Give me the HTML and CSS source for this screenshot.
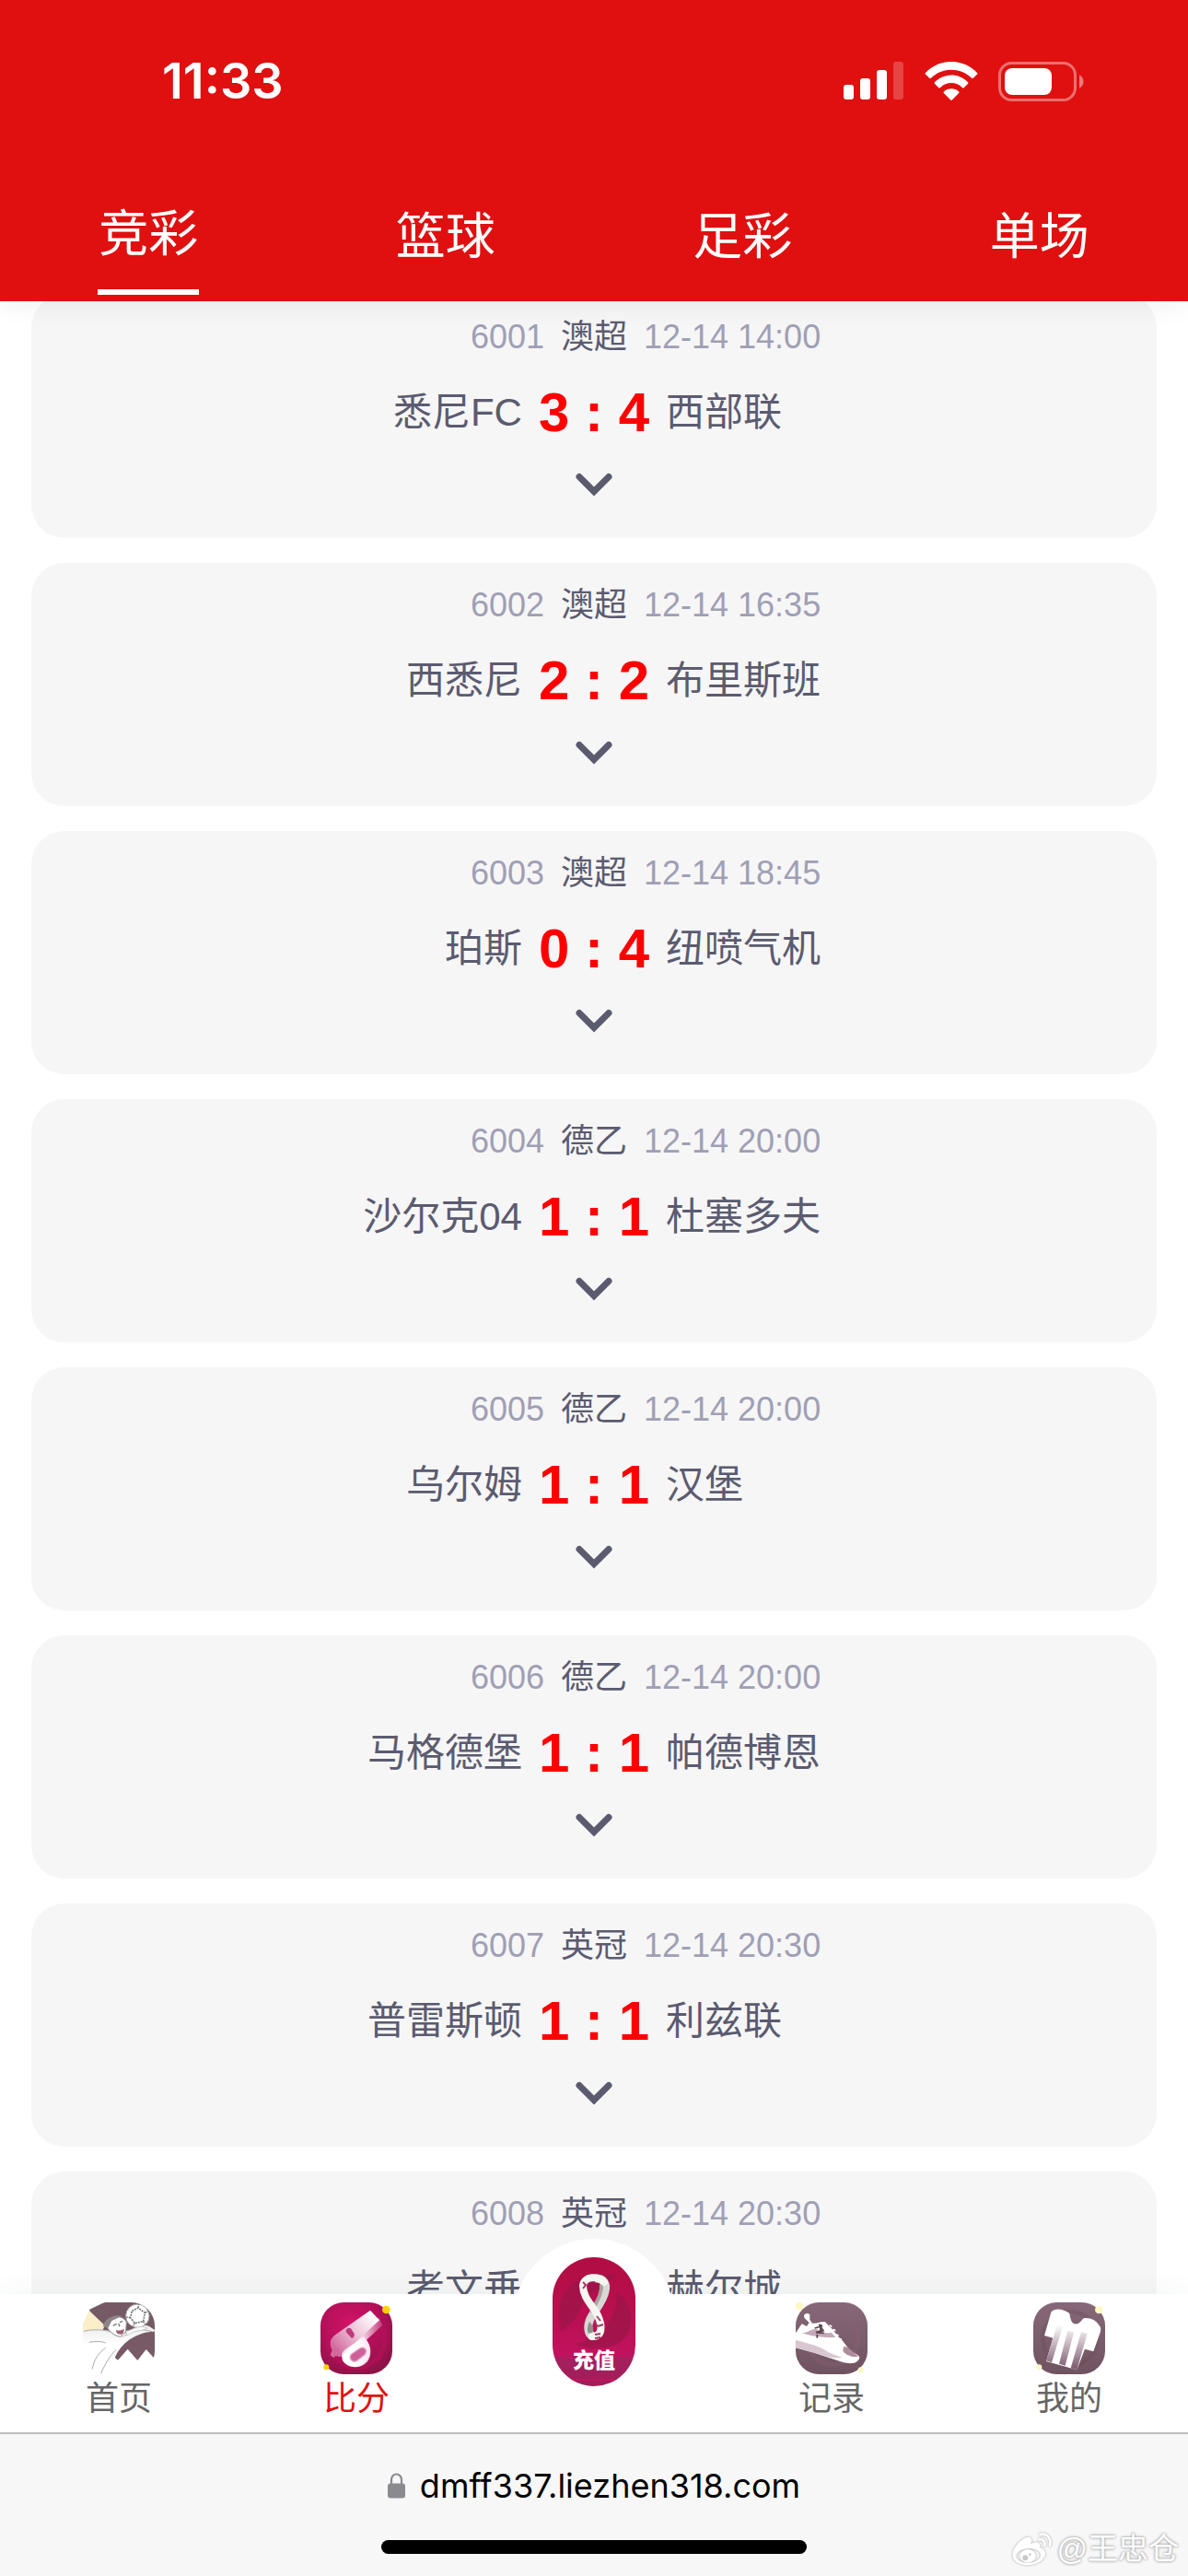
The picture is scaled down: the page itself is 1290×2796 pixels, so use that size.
FILE: index.html
```html
<!DOCTYPE html>
<html lang="zh-CN">
<head>
<meta charset="utf-8">
<meta name="viewport" content="width=device-width, initial-scale=1">
<title>比分</title>
<link rel="stylesheet" href="styles.css">
</head>
<body>
<svg class="defs" aria-hidden="true">
  <defs>
    <symbol id="chevron" viewBox="0 0 40 26"><path d="M4 4.500 20 20.500 36 4.500" fill="none" stroke="currentColor" stroke-width="7" stroke-linecap="round"/></symbol>
  </defs>
</svg>
<header class="header">
  <div class="status">
    <time class="clock">11:33</time>
    <div class="status-icons">
      <svg width="66" height="42" viewBox="0 0 66 42" fill="#fff" aria-hidden="true">
        <rect x="0" y="25" width="11" height="16" rx="3"/><rect x="18" y="18" width="11" height="23" rx="3"/><rect x="36" y="9" width="11" height="32" rx="3"/><rect x="54" y="0" width="11" height="41" rx="3" opacity=".22"/>
      </svg>
      <svg width="58" height="43" viewBox="0 0 58 43" fill="#fff" aria-hidden="true">
        <path d="M.8 12.200C16-4.200 42-4.200 57.200 12.200a1.200 1.200 0 0 1 0 1.400l-4.400 4.200a1.200 1.200 0 0 1-1.600 0C39 5.600 19 5.600 6.800 17.800a1.200 1.200 0 0 1-1.600 0L.8 13.600a1.200 1.200 0 0 1 0-1.400Z"/>
        <path d="M10.800 22.400C21 12 37 12 47.200 22.400a1.200 1.200 0 0 1 0 1.400l-4.500 4.400a1.200 1.200 0 0 1-1.600 0C34 21.400 24 21.400 16.900 28.200a1.200 1.200 0 0 1-1.600 0l-4.500-4.400a1.200 1.200 0 0 1 0-1.400Z"/>
        <path d="M20.800 32.400c4.600-4.200 11.800-4.200 16.400 0a1.200 1.200 0 0 1 0 1.600l-7.400 7.600a1.200 1.200 0 0 1-1.600 0L20.800 34a1.200 1.200 0 0 1 0-1.600Z"/>
      </svg>
      <svg width="93" height="43" viewBox="0 0 93 43" fill="#fff" aria-hidden="true">
        <rect x="1.500" y="1.500" width="82" height="40" rx="13" fill="none" stroke="#fff" stroke-width="3" opacity=".4"/>
        <rect x="7" y="7" width="51" height="29" rx="8"/><path d="M88 14.500c6 2 6 12 0 14Z" opacity=".45"/>
      </svg>
    </div>
  </div>
  <nav class="tabs">
    <a class="tab tab-active" href="#jingcai">竞彩</a>
    <a class="tab" href="#lanqiu">篮球</a>
    <a class="tab" href="#zucai">足彩</a>
    <a class="tab" href="#danchang">单场</a>
  </nav>
</header>
<main class="scroll">
  <div class="list">
    <article class="card">
      <div class="row meta"><span class="left">6001</span><span class="league">澳超</span><time>12-14 14:00</time></div>
      <div class="row match"><span class="left">悉尼FC</span><strong class="score">3 : 4</strong><span>西部联</span></div>
      <button class="more" type="button" aria-label="展开"><svg class="chevron"><use href="#chevron"/></svg></button>
    </article>
    <article class="card">
      <div class="row meta"><span class="left">6002</span><span class="league">澳超</span><time>12-14 16:35</time></div>
      <div class="row match"><span class="left">西悉尼</span><strong class="score">2 : 2</strong><span>布里斯班</span></div>
      <button class="more" type="button" aria-label="展开"><svg class="chevron"><use href="#chevron"/></svg></button>
    </article>
    <article class="card">
      <div class="row meta"><span class="left">6003</span><span class="league">澳超</span><time>12-14 18:45</time></div>
      <div class="row match"><span class="left">珀斯</span><strong class="score">0 : 4</strong><span>纽喷气机</span></div>
      <button class="more" type="button" aria-label="展开"><svg class="chevron"><use href="#chevron"/></svg></button>
    </article>
    <article class="card">
      <div class="row meta"><span class="left">6004</span><span class="league">德乙</span><time>12-14 20:00</time></div>
      <div class="row match"><span class="left">沙尔克04</span><strong class="score">1 : 1</strong><span>杜塞多夫</span></div>
      <button class="more" type="button" aria-label="展开"><svg class="chevron"><use href="#chevron"/></svg></button>
    </article>
    <article class="card">
      <div class="row meta"><span class="left">6005</span><span class="league">德乙</span><time>12-14 20:00</time></div>
      <div class="row match"><span class="left">乌尔姆</span><strong class="score">1 : 1</strong><span>汉堡</span></div>
      <button class="more" type="button" aria-label="展开"><svg class="chevron"><use href="#chevron"/></svg></button>
    </article>
    <article class="card">
      <div class="row meta"><span class="left">6006</span><span class="league">德乙</span><time>12-14 20:00</time></div>
      <div class="row match"><span class="left">马格德堡</span><strong class="score">1 : 1</strong><span>帕德博恩</span></div>
      <button class="more" type="button" aria-label="展开"><svg class="chevron"><use href="#chevron"/></svg></button>
    </article>
    <article class="card">
      <div class="row meta"><span class="left">6007</span><span class="league">英冠</span><time>12-14 20:30</time></div>
      <div class="row match"><span class="left">普雷斯顿</span><strong class="score">1 : 1</strong><span>利兹联</span></div>
      <button class="more" type="button" aria-label="展开"><svg class="chevron"><use href="#chevron"/></svg></button>
    </article>
    <article class="card">
      <div class="row meta"><span class="left">6008</span><span class="league">英冠</span><time>12-14 20:30</time></div>
      <div class="row match"><span class="left">考文垂</span><strong class="score">1 : 1</strong><span>赫尔城</span></div>
      <button class="more" type="button" aria-label="展开"><svg class="chevron"><use href="#chevron"/></svg></button>
    </article>
  </div>
</main>
<nav class="tabbar">
  <a class="item" href="#home">
    <svg class="icon" viewBox="0 0 234 234" aria-hidden="true">
      <defs>
        <clipPath id="tile"><rect width="234" height="234" rx="76"/></clipPath>
        <linearGradient id="cape" x1="0" y1="0" x2="0" y2="1"><stop offset="0" stop-color="#ececec"/><stop offset=".4" stop-color="#fff"/></linearGradient>
      </defs>
      <g clip-path="url(#tile)">
        <rect width="234" height="234" fill="#fff"/>
        <path d="M20 24 70 0h170v100H60Z" fill="#755a65"/>
        <path d="M0 70 20 26l52 50-10 18H0Z" fill="#fbeec9"/>
        <path d="M104 180C130 120 180 94 240 84v106l-34-37-28 36-32-37-32 36Z" fill="#775a66"/>
        <path d="M0 96C40 82 80 84 130 110 160 86 190 66 216 78l24 16C180 96 134 122 104 176L60 234H0Z" fill="url(#cape)"/>
        <path d="M2 94c44-10 90-4 128 18M30 218c8-36 22-54 44-70M58 234c14-34 30-60 50-80M20 130c20-4 40-4 54 2M134 110c30-20 60-26 94-14" fill="none" stroke="#aaa" stroke-width="3"/>
        <path d="M76 78C86 42 130 38 142 64l-2 32-18 16C100 108 90 98 76 78Z" fill="#fff" stroke="#888" stroke-width="3"/>
        <path d="M66 78C70 50 106 38 128 44L94 60 82 84Z" fill="#8d8589"/>
        <path d="M108 90c12 4 18 0 26-4 0 10-2 18-12 18s-14-6-14-14Z" fill="#9c6070"/>
        <path d="m98 76 12-6m10-5 10-4m-14 8 4 10" fill="none" stroke="#777" stroke-width="4"/>
        <circle cx="178" cy="44" r="38" fill="#fff" stroke="#aaa" stroke-width="3"/>
        <path d="m160 28 20-10 22 16-5 28-28 6-14-18ZM180 18l2-12M202 34l12-6M197 62l8 12M169 68l-6 10M155 50l-14-2" fill="none" stroke="#777" stroke-width="5" stroke-dasharray="6 3"/>
        <path d="M140 94c24-4 44-24 70-10l-20 8c-20 0-30 6-46 16Z" fill="#fafafa" stroke="#bbb" stroke-width="2"/>
      </g>
    </svg>
    <span>首页</span>
  </a>
  <a class="item item-active" href="#score">
    <svg class="icon" viewBox="0 0 234 234" aria-hidden="true">
      <defs>
        <radialGradient id="mag" cx=".42" cy=".3" r=".75"><stop offset="0" stop-color="#d31468"/><stop offset=".5" stop-color="#b5105a"/><stop offset="1" stop-color="#8b1346"/></radialGradient>
        <linearGradient id="whistle" x1=".1" y1=".8" x2=".9" y2=".1"><stop offset="0" stop-color="#d36a9f"/><stop offset=".5" stop-color="#efc4da"/><stop offset="1" stop-color="#fff"/></linearGradient>
        <linearGradient id="whistleSide" x1="0" y1="0" x2="1" y2="0"><stop offset="0" stop-color="#fff"/><stop offset=".45" stop-color="#fbe6f0"/><stop offset="1" stop-color="#c43b7c"/></linearGradient>
      </defs>
      <rect width="234" height="234" rx="76" fill="url(#mag)"/>
      <circle cx="118" cy="120" r="92" fill="none" stroke="#c2105f" stroke-width="16" opacity=".45"/>
      <path d="M190 50 202 74 150 122c14 18 20 50 2 72-24 24-62 22-80-4l-6-30Z" fill="url(#whistleSide)"/>
      <path d="M162 26 192 58 84 158c-6 8-14 14-20 20l-14-4-8 6-10-8 6-16C28 138 30 118 48 106Z" fill="url(#whistle)"/>
      <path d="M70 166C84 142 116 136 140 112c20 18 32 50 12 78-22 26-62 26-78 0Z" fill="#fff" opacity=".75"/>
      <path d="M86 86q7-6 14 0l10 16q2 12-8 15L84 98q-4-7 2-12Z" fill="#bd3b7a"/>
      <path d="M102 168 128 150c16-8 26 6 16 20l-26 20c-16 8-28-10-16-22Z" fill="#ce6098" stroke="#e29bc0" stroke-width="4"/>
      <circle cx="214" cy="24" r="13" fill="#ffd000"/><circle cx="19" cy="211" r="9" fill="#ffd000"/>
    </svg>
    <span>比分</span>
  </a>
  <a class="item recharge" href="#recharge">
    <svg class="pill" viewBox="0 0 90 140" aria-hidden="true">
      <defs>
        <linearGradient id="pillBg" x1="0" y1="0" x2="0" y2="1"><stop offset="0" stop-color="#b10d43"/><stop offset=".4" stop-color="#b80f4e"/><stop offset=".75" stop-color="#c2125f"/><stop offset=".8" stop-color="#a3205e"/><stop offset="1" stop-color="#a21c58"/></linearGradient>
        <clipPath id="pillClip"><rect width="90" height="140" rx="45"/></clipPath>
      </defs>
      <g clip-path="url(#pillClip)">
        <rect width="90" height="140" fill="url(#pillBg)"/>
        <path d="M10 80C-4 40 30 10 68 20L54 34C36 38 30 56 26 66ZM70 38c26 20 18 60-16 60-12 2-20 0-30-4 28-6 46-26 46-56Z" fill="#9b1548" opacity=".75"/>
        <rect y="132" width="90" height="2" fill="#c2125f"/>
      </g>
      <path d="M46 23C56 22 59 30 57 37 55 48 46 57 42 65 37 74 38 84 44 86" fill="none" stroke="#d9d8d5" stroke-width="9"/>
      <path d="M53 29C54 42 46 50 42 60" fill="none" stroke="#a5a4a0" stroke-width="4"/>
      <path d="M40 70C36 78 38 84 42 83 46 80 44 74 40 70Z" fill="#92918e"/>
      <path d="M56 27C50 20 34 20 33 31 33 44 44 53 49 63 54 74 55 86 43 86" fill="none" stroke="#f6f5f2" stroke-width="8" stroke-linecap="round"/>
      <path d="m33 27 3 3-3 4m15 30 4 5m-3 6 6-2m-9 11 6-1m0 4-6 1m-1-18 4 5" fill="none" stroke="#a43962" stroke-width="2"/>
    </svg>
    <span class="pill-label">充值</span>
  </a>
  <a class="item" href="#records">
    <svg class="icon" viewBox="0 0 234 234" aria-hidden="true">
      <defs>
        <linearGradient id="mauve" x1="0" y1="0" x2="0" y2="1"><stop offset="0" stop-color="#86687a"/><stop offset="1" stop-color="#70535f"/></linearGradient>
        <clipPath id="shoeClip"><rect width="234" height="234" rx="76"/></clipPath>
      </defs>
      <rect width="234" height="234" rx="76" fill="url(#mauve)"/>
      <circle cx="120" cy="118" r="84" fill="none" stroke="#8b6279" stroke-width="14" opacity=".3"/>
      <g clip-path="url(#shoeClip)">
        <path d="M0 100 20 70l16 8 8-12-16-16c-4-14 10-18 18-10l0 16 8 12c18 2 32-8 42-4l20 20c12 10 20 28 36 40l26 34c16 8 30 14 30 22-6 22-32 20-52 16L60 164 0 148Z" fill="#fff"/>
        <path d="M20 100c24 0 30-16 50-12 14 10 26 14 46 10l14 16c-34 2-70-2-110-14Z" fill="#c4a9b8"/>
        <path d="M0 122c46 14 74 18 110 42l42 16C100 186 60 160 0 148Z" fill="#d8c7d0"/>
        <path d="m156 144 14 2 34 30c-20 4-40-4-50-18Z" fill="#af8c9d"/>
        <path d="m62 84 22-6-8-6 14 20-24 6 26 2M70 104v12M84 72l-6 28" fill="none" stroke="#59404b" stroke-width="5"/>
        <path d="m110 74 8 6m4 8 8 4m0 12 10 4m-2 10 12 2" stroke="#fff" stroke-width="5"/>
      </g>
      <circle cx="12" cy="12" r="13" fill="#fff7c4"/><circle cx="212" cy="220" r="9" fill="#fff7c4"/>
    </svg>
    <span>记录</span>
  </a>
  <a class="item" href="#mine">
    <svg class="icon" viewBox="0 0 234 234" aria-hidden="true">
      <defs>
        <linearGradient id="stripe" x1="0" y1="0" x2="0" y2="1"><stop offset="0" stop-color="#fff"/><stop offset="1" stop-color="#79566a"/></linearGradient>
      </defs>
      <rect width="234" height="234" rx="76" fill="url(#mauve)"/>
      <circle cx="120" cy="118" r="88" fill="none" stroke="#664a56" stroke-width="14" opacity=".3"/>
      <path d="M58 32c10-14 40-12 60 4 2 14 6 32 16 34 14 4 20-8 30-18 20-4 40 6 50 22 8 8 6 16 4 24l-22 62-28-8-26 68-100-28 22-76-28-8Z" fill="#fff"/>
      <path d="m78 72 18 6-36 118-18-6ZM112 92l20 6-28 108-20-6ZM156 96l20 6-34 118-20-6Z" fill="url(#stripe)"/>
      <circle cx="214" cy="24" r="13" fill="#fff7c4"/><circle cx="19" cy="211" r="9" fill="#fff7c4"/>
    </svg>
    <span>我的</span>
  </a>
</nav>
<footer class="browser">
  <div class="address">
    <svg width="19" height="28" viewBox="0 0 19 28" aria-hidden="true"><path d="M4 13V7.500a5.500 6 0 0 1 11 0V13" fill="none" stroke="#8a8a8f" stroke-width="2.200"/><rect y="11.500" width="19" height="16" rx="3" fill="#8a8a8f"/></svg>
    <span>dmff337.liezhen318.com</span>
  </div>
  <div class="home-bar"></div>
  <div class="watermark">
    <svg width="46" height="40" viewBox="0 0 138 112" aria-hidden="true">
      <path d="M94 8c22-6 38 14 32 36M92 24c12-2 20 8 17 20" fill="none" stroke="#fff" stroke-width="8" stroke-linecap="round"/>
      <path fill-rule="evenodd" d="M4 74C6 46 38 14 58 16c10 2 10 12 6 22 16-8 32-6 30 12 12 4 22 14 16 28C96 118 4 118 4 74ZM16 78c4 32 78 28 80-4-2-30-78-26-80 4Z" fill="#fff"/>
      <ellipse cx="54" cy="78" rx="26" ry="22" fill="#fff"/><circle cx="46" cy="84" r="9" fill="#c9c9c9"/><circle cx="61" cy="73" r="4" fill="#c9c9c9"/>
    </svg>
    <span>@王忠仓</span>
  </div>
</footer>
</body>
</html>
```
FILE: styles.css
```css
* { box-sizing: border-box; }
body {
  margin: 0;
  height: 100vh;
  display: flex;
  flex-direction: column;
  background: #fff;
  color: #5b5b70;
  font-family: "Liberation Sans", "Noto Sans CJK SC", sans-serif;
}
a { color: inherit; text-decoration: none; }
svg { display: block; flex: none; }
.defs { position: absolute; width: 0; height: 0; }

.header {
  position: relative;
  z-index: 1;
  flex: none;
  background: #e01010;
  color: #fff;
  box-shadow: 0 0 30px rgba(0, 0, 0, .08);
}
.status {
  display: flex;
  justify-content: space-between;
  align-items: center;
  height: 176px;
  padding: 0 113px 0 176px;
}
.clock { font: 600 54px/60px Inter, sans-serif; }
.status-icons { display: flex; align-items: center; gap: 22px; }
.tabs { display: grid; grid-template-columns: repeat(4, 1fr); height: 151px; }
.tab {
  justify-self: center;
  height: 144px;
  padding: 41px 1px 0;
  font-size: 54px;
  line-height: 80px;
}
.tab-active { padding-top: 38px; border-bottom: 6px solid #fff; }

.scroll { flex: 1; min-height: 0; overflow: hidden; }
.list {
  display: flex;
  flex-direction: column;
  gap: 27px;
  margin-top: -7px;
  padding: 0 34px;
}
.card {
  display: flex;
  flex-direction: column;
  gap: 28px;
  padding: 22px 0 38px;
  border-radius: 36px;
  background: #f6f6f6;
}
.row {
  display: grid;
  grid-template-columns: 1fr auto 1fr;
  gap: 18px;
  white-space: nowrap;
}
.left { text-align: right; }
.meta { font-size: 36px; line-height: 48px; color: #9f9fb5; }
.league { color: #5b5b70; }
.match { font-size: 42px; line-height: 60px; }
.score { font-size: 60px; color: #f00; }
.more {
  display: flex;
  align-items: center;
  justify-content: center;
  align-self: center;
  width: 80px;
  height: 40px;
  padding: 0;
  border: 0;
  background: none;
  color: #5b5b70;
}
.chevron { width: 40px; height: 26px; }

.tabbar {
  position: relative;
  flex: none;
  display: grid;
  grid-template-columns: repeat(5, 1fr);
  height: 150px;
  background: #fff;
  box-shadow: 0 0 30px rgba(40, 60, 70, .06);
}
.item {
  display: flex;
  flex-direction: column;
  align-items: center;
  padding-top: 9px;
  font-size: 36px;
  line-height: 54px;
  color: #666;
}
.item-active { color: #e01010; }
.icon { width: 78px; height: 78px; }
.recharge {
  position: relative;
  justify-self: center;
  width: 176px;
  height: 176px;
  margin-top: -60px;
  padding-top: 20px;
  border-radius: 50%;
  background: #fff;
}
.pill { width: 90px; height: 140px; }
.pill-label {
  position: absolute;
  top: 115px;
  color: #fff;
  font-size: 23px;
  font-weight: 900;
  line-height: 34px;
}

.browser {
  position: relative;
  flex: none;
  display: flex;
  flex-direction: column;
  align-items: center;
  justify-content: space-between;
  height: 156px;
  padding: 32px 0 24px;
  border-top: 2px solid #bdbdbf;
  background: #f7f7f7;
  color: #000;
}
.address {
  display: flex;
  align-items: center;
  gap: 16px;
  font: 36px/48px Inter, sans-serif;
}
.home-bar { width: 462px; height: 15px; border-radius: 8px; background: #000; }
.watermark {
  position: absolute;
  right: 10px;
  bottom: 8px;
  display: flex;
  align-items: center;
  gap: 4px;
  color: #fff;
  font-size: 33px;
  line-height: 42px;
  text-shadow: 0 0 3px #999, 0 0 3px #bbb;
}
.watermark svg { filter: drop-shadow(0 0 1px #999); }
```
